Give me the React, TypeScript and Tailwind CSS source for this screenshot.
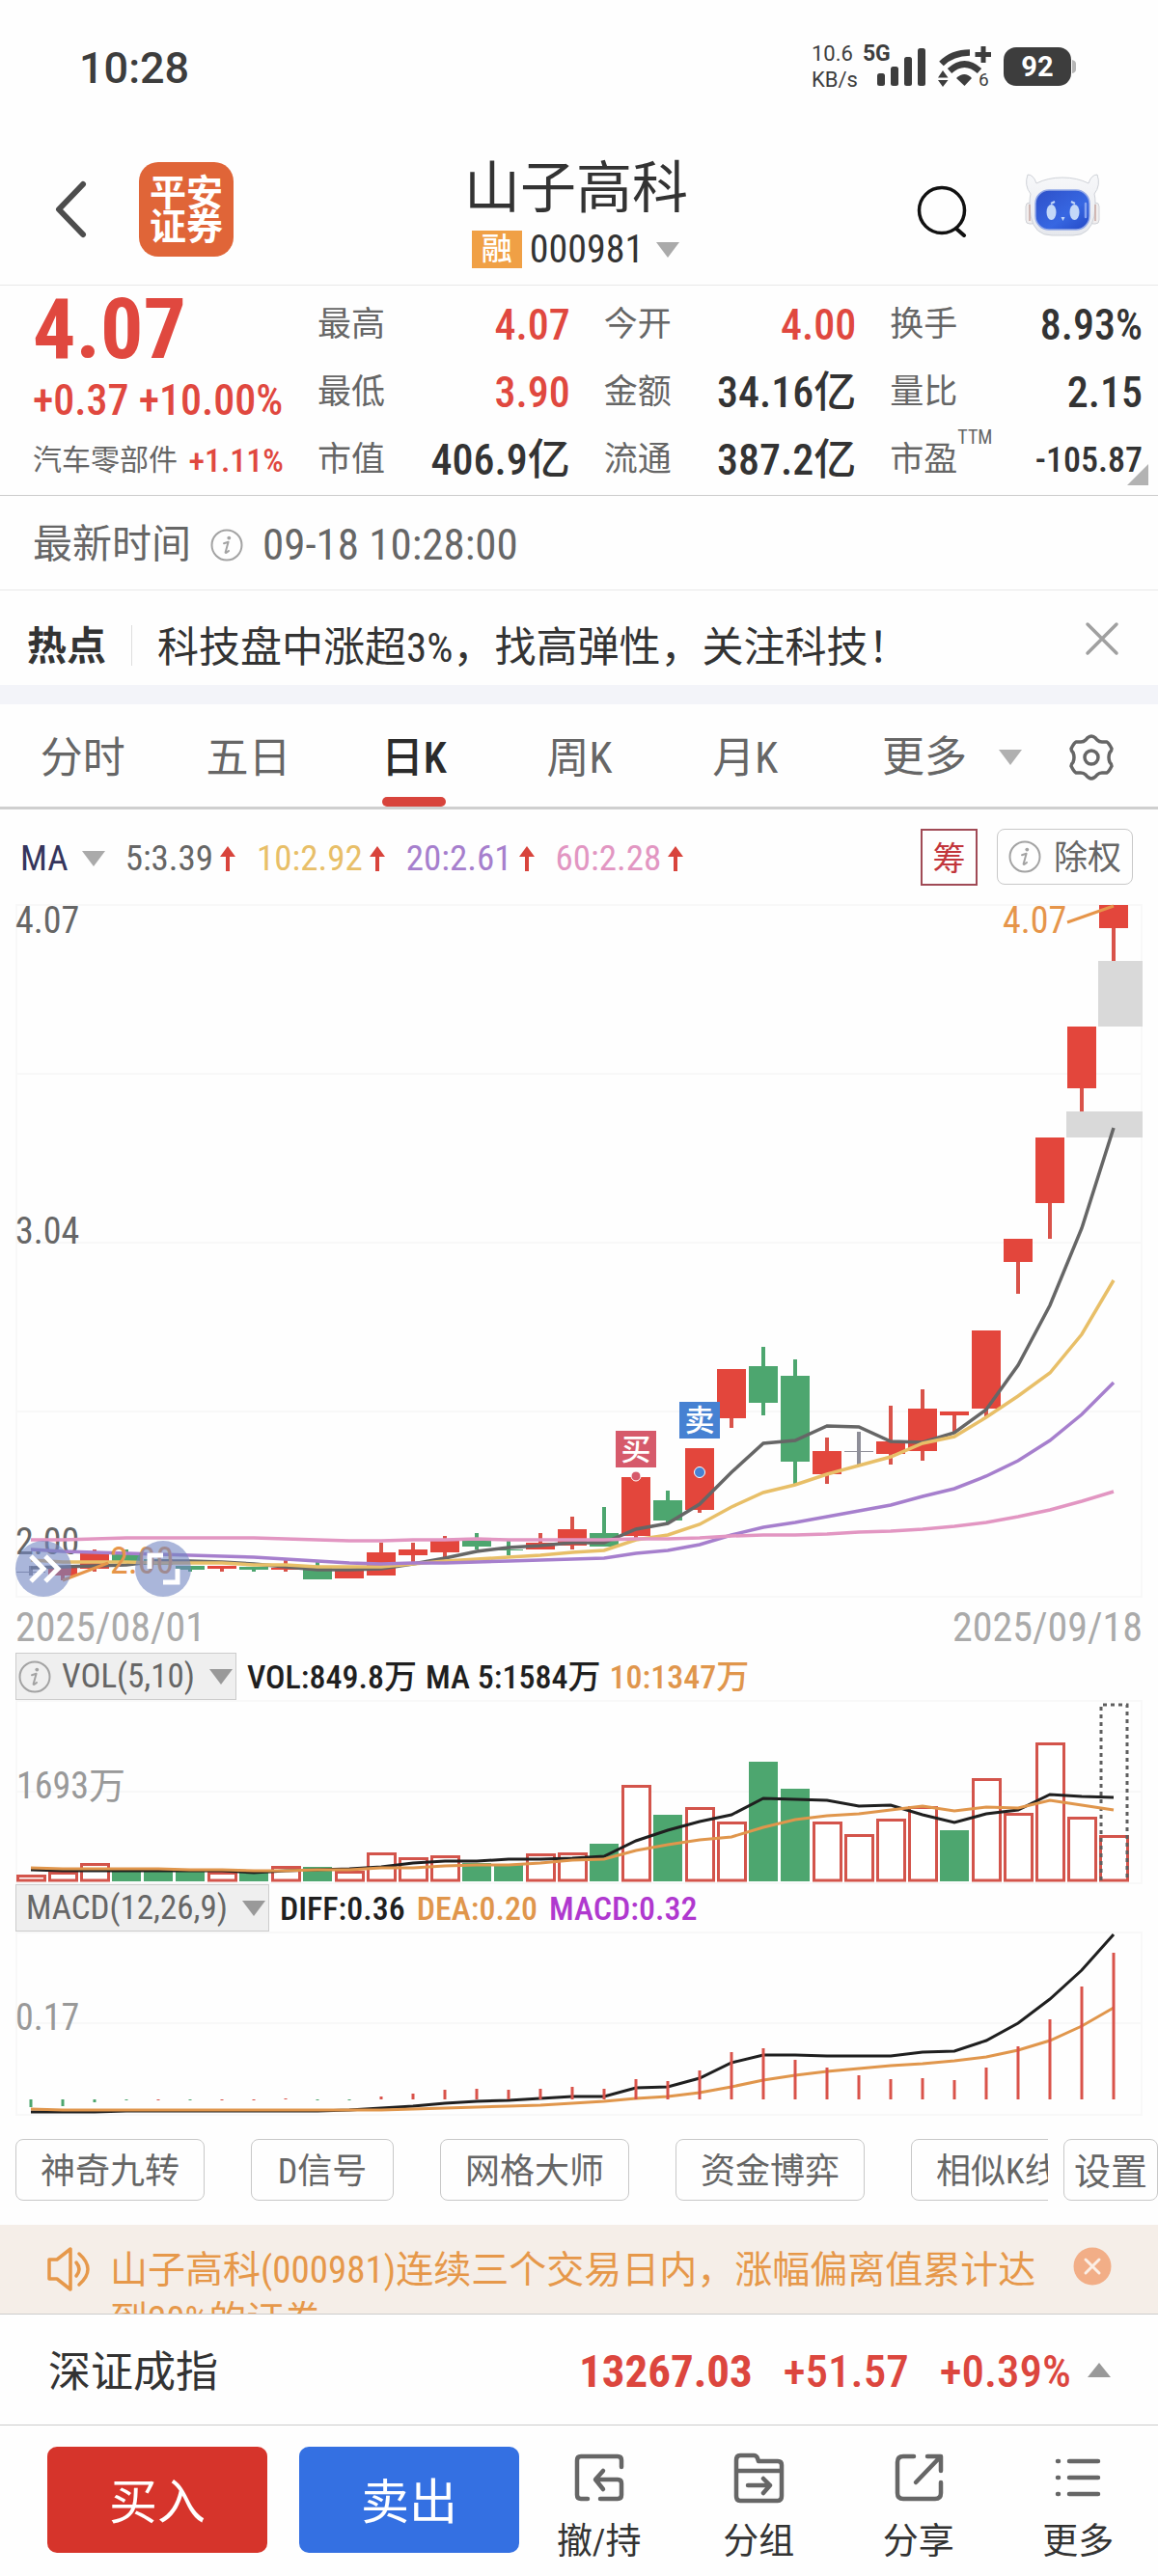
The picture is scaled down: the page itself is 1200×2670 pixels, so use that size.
import React, { useState } from 'react';
import clsx from 'clsx';

type Tone = 'red' | 'green' | 'gray';

interface Candle {
  tone: Tone;
  top: number;
  bottom: number;
  high: number;
  low: number;
}

const FIRST_X = 32;
const STEP = 33;
const xAt = (i: number) => FIRST_X + i * STEP;
const toPoints = (ys: number[]) => ys.map((y, i) => `${xAt(i)},${y}`).join(' ');

const toneFill: Record<Tone, string> = { red: '#e3463c', green: '#4da66f', gray: '#8e8e98' };
const toneWick: Record<Tone, string> = { red: '#d9534a', green: '#4da66f', gray: '#8e8e98' };

const c = (tone: Tone, top: number, bottom: number, high = top, low = bottom): Candle => ({ tone, top, bottom, high, low });

const candles: Candle[] = [
  c('gray', 1629, 1630, 1623, 1633),
  c('red', 1625, 1633, 1625, 1638),
  c('red', 1610, 1626, 1606, 1629),
  c('green', 1611, 1618, 1606, 1618),
  c('green', 1616, 1622),
  c('green', 1623, 1627, 1623, 1629),
  c('red', 1623, 1626, 1623, 1629),
  c('green', 1624, 1627, 1624, 1629),
  c('red', 1625, 1627, 1617, 1629),
  c('green', 1625, 1637, 1619, 1637),
  c('red', 1628, 1636),
  c('red', 1609, 1633, 1599, 1633),
  c('red', 1606, 1612, 1599, 1619),
  c('red', 1597, 1609, 1592, 1614),
  c('green', 1597, 1603, 1589, 1606),
  c('green', 1606, 1607, 1597, 1612),
  c('red', 1599, 1606, 1589, 1606),
  c('red', 1585, 1602, 1572, 1606),
  c('green', 1589, 1603, 1562, 1603),
  c('red', 1531, 1592, 1531, 1594),
  c('green', 1555, 1576, 1545, 1579),
  c('red', 1501, 1565, 1501, 1568),
  c('red', 1419, 1470, 1419, 1480),
  c('green', 1416, 1454, 1396, 1467),
  c('green', 1426, 1515, 1409, 1538),
  c('red', 1504, 1528, 1490, 1538),
  c('gray', 1504, 1505, 1484, 1518),
  c('red', 1494, 1507, 1457, 1518),
  c('red', 1460, 1504, 1440, 1514),
  c('red', 1463, 1467, 1463, 1484),
  c('red', 1379, 1460, 1379, 1468),
  c('red', 1284, 1308, 1284, 1341),
  c('red', 1179, 1247, 1179, 1284),
  c('red', 1064, 1128, 1064, 1152),
  c('red', 938, 962, 938, 996),
];

const priceLines = [
  { color: '#666666', ys: [1625, 1624, 1623, 1622, 1618, 1618, 1619, 1621, 1624, 1627, 1627, 1626, 1621, 1615, 1608, 1604, 1602, 1599, 1599, 1585, 1579, 1559, 1526, 1496, 1493, 1478, 1479, 1494, 1495, 1485, 1461, 1415, 1353, 1273, 1169] },
  { color: '#e8bf68', ys: [1617, 1619, 1619, 1619, 1620, 1620, 1620, 1622, 1622, 1624, 1624, 1624, 1621, 1618, 1616, 1614, 1612, 1609, 1607, 1596, 1591, 1580, 1562, 1547, 1539, 1528, 1519, 1510, 1496, 1489, 1469, 1447, 1423, 1383, 1327] },
  { color: '#a67fcd', ys: [1606, 1608, 1609, 1610, 1611, 1612, 1613, 1614, 1616, 1618, 1620, 1621, 1620, 1620, 1619, 1618, 1617, 1616, 1615, 1610, 1607, 1601, 1591, 1583, 1578, 1572, 1566, 1560, 1551, 1543, 1530, 1514, 1493, 1466, 1433] },
  { color: '#e296c2', ys: [1596, 1596, 1595, 1594, 1594, 1594, 1594, 1594, 1595, 1596, 1597, 1597, 1596, 1596, 1595, 1596, 1596, 1596, 1596, 1595, 1595, 1594, 1592, 1591, 1591, 1590, 1588, 1587, 1585, 1582, 1578, 1572, 1565, 1556, 1546] },
];

const volumeTops = [1943, 1940, 1931, 1939, 1939, 1939, 1940, 1941, 1934, 1935, 1939, 1920, 1925, 1923, 1931, 1933, 1921, 1920, 1911, 1850, 1881, 1873, 1888, 1826, 1854, 1888, 1901, 1885, 1872, 1897, 1843, 1879, 1806, 1883, 1902];
const volumeGreen = [3, 4, 5, 7, 9, 14, 15, 18, 20, 23, 24, 29];
const volumeMa5 = [1938, 1939, 1939, 1939, 1939, 1939, 1939, 1941, 1939, 1938, 1937, 1935, 1931, 1929, 1929, 1927, 1927, 1926, 1924, 1908, 1897, 1888, 1881, 1864, 1865, 1866, 1872, 1871, 1881, 1889, 1880, 1876, 1860, 1862, 1863];
const volumeMa10 = [1936, 1937, 1937, 1937, 1937, 1938, 1938, 1939, 1939, 1938, 1938, 1936, 1936, 1934, 1933, 1933, 1931, 1928, 1927, 1918, 1912, 1907, 1904, 1894, 1886, 1882, 1880, 1876, 1872, 1877, 1873, 1874, 1866, 1871, 1876];

const macdZero = 2176;
const macdTips = [2184, 2183, 2179, 2177, 2176, 2177, 2176, 2176, 2175, 2177, 2177, 2173, 2170, 2166, 2165, 2166, 2165, 2163, 2165, 2155, 2157, 2146, 2127, 2123, 2135, 2143, 2151, 2155, 2154, 2156, 2143, 2121, 2093, 2059, 2024];
const diff = [2189, 2189, 2189, 2188, 2188, 2188, 2188, 2188, 2188, 2188, 2187, 2185, 2183, 2180, 2178, 2177, 2175, 2173, 2173, 2164, 2163, 2154, 2138, 2130, 2130, 2131, 2131, 2131, 2127, 2126, 2115, 2097, 2072, 2042, 2005];
const dea = [2186, 2187, 2187, 2187, 2187, 2187, 2187, 2187, 2187, 2187, 2187, 2187, 2186, 2185, 2184, 2183, 2182, 2180, 2178, 2175, 2173, 2169, 2163, 2156, 2151, 2147, 2144, 2141, 2139, 2136, 2132, 2125, 2115, 2100, 2081];

const quoteColumns = [
  [
    { label: '最高', value: '4.07', up: true },
    { label: '最低', value: '3.90', up: true },
    { label: '市值', value: '406.9亿' },
  ],
  [
    { label: '今开', value: '4.00', up: true },
    { label: '金额', value: '34.16亿' },
    { label: '流通', value: '387.2亿' },
  ],
  [
    { label: '换手', value: '8.93%' },
    { label: '量比', value: '2.15' },
    { label: '市盈', value: '-105.87', note: 'TTM', small: true },
  ],
];

const periods = ['分时', '五日', '日K', '周K', '月K'];

const averages = [
  { text: '5:3.39', color: 'text-[#666666]' },
  { text: '10:2.92', color: 'text-[#e8bf68]' },
  { text: '20:2.61', color: 'text-[#a67fcd]' },
  { text: '60:2.28', color: 'text-[#e296c2]' },
];

const tools = ['神奇九转', 'D信号', '网格大师', '资金博弈', '相似K线'];

function Caret({ up = false, className }: { up?: boolean; className?: string }) {
  return (
    <svg viewBox="0 0 26 18" className={clsx('w-[26px] h-[18px] shrink-0', className)} aria-hidden="true">
      <path d={up ? 'M13 2 25 17H1Z' : 'M1 1H25L13 17Z'} fill="currentColor" />
    </svg>
  );
}

function InfoIcon() {
  return (
    <svg viewBox="0 0 34 34" className="w-[34px] h-[34px] shrink-0 text-[#a3a3a3]" fill="none" stroke="currentColor" aria-hidden="true">
      <circle cx="17" cy="17" r="15.5" strokeWidth="2" />
      <circle cx="19.3" cy="9.6" r="1.9" fill="currentColor" stroke="none" />
      <path d="M14 15.2 18.6 13.8 15.6 24.4Q15.6 26 19 23" strokeWidth="2" strokeLinecap="round" strokeLinejoin="round" />
    </svg>
  );
}

function StatusBar() {
  return (
    <div className="flex h-[138px] items-center justify-between pr-[85px] pl-[82px] font-['Roboto',sans-serif] text-[#3d3d3d]">
      <span className="pt-[4px] text-[45px] font-medium">10:28</span>
      <div className="flex items-center">
        <div className="w-[68px] text-[22px] leading-[27px]">
          <div className="flex gap-[10px]">
            10.6<b className="text-[23px]">5G</b>
          </div>
          <div>KB/s</div>
        </div>
        <svg viewBox="0 0 206 44" className="h-[44px] w-[206px] overflow-visible" aria-label="信号 电量" role="img">
          <g fill="#3d3d3d">
            <rect x="0" y="29" width="8" height="13" rx="2.5" />
            <rect x="14" y="22" width="8" height="20" rx="2.5" />
            <rect x="28" y="12" width="8" height="30" rx="2.5" />
            <rect x="42" y="3" width="8" height="39" rx="2.5" />
            <path d="M82 34Q90.500 26 98 34L90.500 42Z" />
            <path d="M63 33.500 68 26 73.500 33.500Z M63 36 73.500 36 68 43Z" />
            <rect x="131" y="2" width="70" height="40" rx="13" />
          </g>
          <g fill="none" stroke="#3d3d3d" strokeWidth="6.500">
            <path d="M66.500 19Q78 7.500 96 7.500" />
            <path d="M75 26.500Q90.500 12.500 106 26.500" />
            <path d="M101.500 9.500H118M110 1V18" strokeWidth="5" />
          </g>
          <path d="M202 15Q206 16 206 19V25Q206 28 202 29Z" fill="#b5b5b5" />
          <text x="105" y="42" fontSize="19" fill="#3d3d3d">6</text>
          <text x="166" y="32" textAnchor="middle" fontSize="29" fontWeight="bold" fill="#ffffff">92</text>
        </svg>
      </div>
    </div>
  );
}

function RobotIcon() {
  return (
    <svg viewBox="0 0 78 66" className="h-[66px] w-[78px]" aria-hidden="true">
      <defs>
        <linearGradient id="face" x1="0" y1="0" x2="1" y2="1">
          <stop offset="0" stopColor="#2e50c8" />
          <stop offset="0.6" stopColor="#3767e2" />
          <stop offset="1" stopColor="#2448c4" />
        </linearGradient>
        <linearGradient id="shell" x1="0" y1="0" x2="0" y2="1">
          <stop offset="0" stopColor="#f7f8fa" />
          <stop offset="1" stopColor="#e6e8ed" />
        </linearGradient>
      </defs>
      <g stroke="#cfd2d8" strokeWidth="1">
        <rect x="1" y="30" width="10" height="22" rx="4" fill="#f1eeee" />
        <rect x="67" y="30" width="10" height="22" rx="4" fill="#f1eeee" />
        <path d="M3 1Q9 1 12 10Q24 4 39 4Q54 4 66 10Q69 1 75 1Q79 12 72 21Q74 28 72 44Q68 64 50 64H28Q10 64 6 44Q4 28 6 21Q-1 12 3 1Z" fill="url(#shell)" />
      </g>
      <path d="M5 32V49M73 32V49" stroke="#c9a9a4" strokeWidth="1.500" />
      <rect x="11" y="17" width="56" height="41" rx="14" fill="url(#face)" stroke="#93a9e8" strokeWidth="1.500" />
      <ellipse cx="27.500" cy="40" rx="5" ry="8" fill="#c3d8f8" />
      <ellipse cx="51.500" cy="40" rx="5" ry="8" fill="#c3d8f8" />
      <path d="M27 31 31 29M52 31 48 29" stroke="#c3d8f8" strokeWidth="2" />
      <path d="M37.500 45H41.500L39.500 49Z" fill="#c3d8f8" />
      <path d="M63 31V45" stroke="#86a4f2" strokeWidth="2.500" strokeLinecap="round" />
    </svg>
  );
}

function Header() {
  return (
    <header className="grid h-[158px] grid-cols-[1fr_auto_1fr] items-center border-b border-[#e8e8e8] pr-[60px] pl-[54px]">
      <div className="flex items-center gap-[52px]">
        <button aria-label="返回">
          <svg viewBox="0 0 38 62" className="h-[62px] w-[38px]" fill="none" stroke="#4d4d4d" strokeWidth="6" strokeLinecap="round" strokeLinejoin="round">
            <path d="M32 5 7 31 32 57" />
          </svg>
        </button>
        <div className="flex size-[98px] flex-col items-center justify-center rounded-[20px] bg-[#e06538] pt-[2px] text-[38px] leading-[35px] font-bold text-white">
          <span>平安</span>
          <span>证券</span>
        </div>
      </div>
      <div className="flex flex-col items-center pt-[10px]">
        <h1 className="text-[58px] leading-[64px] text-[#333333]">山子高科</h1>
        <button className="flex items-center gap-[8px] pt-[10px] text-[40px] leading-[44px] text-[#333333]">
          <span className="flex h-[39px] w-[52px] items-center justify-center bg-[#f0a045] text-[32px] leading-[39px] font-medium text-white">融</span>
          000981
          <Caret className="ml-[4px] text-[#aaaaaa]" />
        </button>
      </div>
      <div className="flex items-center justify-end gap-[58px]">
        <button aria-label="搜索">
          <svg viewBox="0 0 54 58" className="h-[58px] w-[54px]" fill="none" stroke="#111111" strokeWidth="3.500" strokeLinecap="round">
            <circle cx="26" cy="30" r="23.500" />
            <path d="M41 49 49 56" strokeWidth="4" />
          </svg>
        </button>
        <button aria-label="智能助手" className="pb-[8px]">
          <RobotIcon />
        </button>
      </div>
    </header>
  );
}

function Quote() {
  return (
    <section className="relative flex gap-[35px] border-b border-[#cccccc] pt-[6px] pr-4 pb-px pl-[34px]">
      <div className="w-[260px] whitespace-nowrap text-[#e0483f]">
        <div className="text-[88px] leading-[78px] font-bold">4.07</div>
        <div className="text-[44px] leading-[70px] font-medium">+0.37 +10.00%</div>
        <div className="flex items-center justify-between text-[30px] leading-[54px] text-[#666666]">
          汽车零部件
          <span className="text-[34px] font-medium text-[#e0483f]">+1.11%</span>
        </div>
      </div>
      {quoteColumns.map((column, i) => (
        <dl key={i} className="flex-1">
          {column.map((item) => (
            <div key={item.label} className="flex h-[70px] items-center justify-between whitespace-nowrap">
              <dt className="relative text-[35px] text-[#666666]">
                {item.label}
                {item.note && <span className="absolute -top-[8px] left-full text-[20px] leading-[20px]">{item.note}</span>}
              </dt>
              <dd className={clsx('font-medium', item.small ? 'text-[36px]' : 'text-[44px]', item.up ? 'text-[#e0483f]' : 'text-[#333333]')}>
                {item.value}
              </dd>
            </div>
          ))}
        </dl>
      ))}
      <svg viewBox="0 0 22 22" className="absolute right-[10px] bottom-[10px] size-[22px]" aria-hidden="true">
        <path d="M22 0V22H0Z" fill="#b3b3b3" />
      </svg>
    </section>
  );
}

function Notices() {
  return (
    <>
      <div className="flex h-[98px] items-center gap-[20px] border-b border-[#e8e8e8] px-[34px] pt-[5px] text-[41px] text-[#666666]">
        最新时间
        <InfoIcon />
        <time className="text-[45px]">09-18 10:28:00</time>
      </div>
      <div className="flex h-[98px] items-center px-[28px] pt-[20px] text-[41px] text-[#333333]">
        <b>热点</b>
        <span className="mx-[26px] mb-[4px] h-[42px] w-px bg-[#dddddd]" />
        <span className="flex-1 text-[43px]">科技盘中涨超3%，找高弹性，关注科技！</span>
        <button aria-label="关闭" className="mr-[12px] mb-[18px]">
          <svg viewBox="0 0 36 36" className="size-[36px]" stroke="#a0a0a0" strokeWidth="3.500" strokeLinecap="round">
            <path d="M3 3 33 33M33 3 3 33" />
          </svg>
        </button>
      </div>
      <div className="h-[20px] bg-[#f3f4f9]" />
    </>
  );
}

function PeriodTabs() {
  const [active, setActive] = useState('日K');

  return (
    <nav className="flex h-[109px] border-b-[3px] border-[#cfcfcf] text-[44px] text-[#666666]">
      {periods.map((p) => (
        <button
          key={p}
          onClick={() => setActive(p)}
          className={clsx('relative flex flex-1 items-center justify-center pt-[6px]', p === active && 'font-medium text-[#2b2b2b]')}
        >
          {p}
          {p === active && <span className="absolute bottom-0 h-[10px] w-[66px] rounded-[5px] bg-[#d8443c]" />}
        </button>
      ))}
      <div className="flex w-[28.5%] items-center justify-between pt-[4px] pr-[44px] pl-[56px]">
        <button className="flex items-center gap-[32px]">
          更多
          <Caret className="text-[#b0b0b0]" />
        </button>
        <button aria-label="设置">
          <svg viewBox="0 0 50 50" className="size-[50px]" fill="none" stroke="#666666" strokeWidth="3.500" strokeLinejoin="round">
            <path d="M25 3Q28 3 31 7Q33 9 36 9L41 9Q43 10 46 16Q46 18 44 20Q42 25 44 30Q46 32 46 34Q43 40 41 41L36 41Q33 41 31 43Q28 47 25 47Q22 47 19 43Q17 41 14 41L9 41Q7 40 4 34Q4 32 6 30Q8 25 6 20Q4 18 4 16Q7 10 9 9L14 9Q17 9 19 7Q22 3 25 3Z" />
            <circle cx="25" cy="25" r="7" />
          </svg>
        </button>
      </div>
    </nav>
  );
}

function AverageBar() {
  return (
    <div className="flex h-[98px] items-center pr-[26px] pl-[21px] text-[37px]">
      <button className="flex items-center gap-[13px] pt-[4px] text-[#35355c]">
        MA
        <Caret className="text-[#aaaaaa]" />
      </button>
      <div className="ml-[20px] flex flex-1 gap-[22px] pt-[4px]">
        {averages.map((a) => (
          <span key={a.text} className={clsx('flex items-center gap-[7px]', a.color)}>
            {a.text}
            <svg viewBox="0 0 16 26" className="h-[26px] w-[16px]" aria-hidden="true">
              <path d="M8 0 16 11H10V26H6V11H0Z" fill="#d8443c" />
            </svg>
          </span>
        ))}
      </div>
      <button className="size-[59px] border-2 border-[#a04a55] pt-[2px] text-[34px] leading-[54px] text-[#c2363c]">筹</button>
      <button className="ml-[20px] flex h-[58px] items-center gap-[13px] rounded-[8px] border border-[#c8c8c8] px-[11px] pt-[4px] text-[35px] text-[#666666]">
        <span className="pb-[4px]">
          <InfoIcon />
        </span>
        除权
      </button>
    </div>
  );
}

function PriceChart() {
  return (
    <div className="px-4">
      <svg viewBox="16 937 1168 720" className="block w-full overflow-visible" role="img" aria-label="日K线">
        <g stroke="#f8f8f8" strokeWidth="2">
          <path d="M17 938H1183V1655H17ZM17 1113H1183M17 1288H1183M17 1463H1183" fill="none" />
        </g>
        <rect x="1138" y="996" width="46" height="68" fill="#d9d9d9" />
        <rect x="1105" y="1152" width="79" height="27" fill="#d9d9d9" />
        <g fill="#666666" className="text-[38px]">
          <text x="16" y="967">4.07</text>
          <text x="16" y="1289">3.04</text>
          <text x="16" y="1611">2.00</text>
        </g>
        {candles.map((k, i) => (
          <g key={i}>
            <rect x={xAt(i) - 2} y={k.high} width="4" height={k.low - k.high} fill={toneWick[k.tone]} />
            <rect x={xAt(i) - 15} y={k.top} width="30" height={k.bottom - k.top} fill={toneFill[k.tone]} />
          </g>
        ))}
        {priceLines.map((line) => (
          <polyline key={line.color} points={toPoints(line.ys)} fill="none" stroke={line.color} strokeWidth="3.500" />
        ))}
        <path d="M1106 956 1154 939M65 1638 112 1620" stroke="#e6954a" strokeWidth="3" />
        <g fill="#e6954a" className="text-[38px]">
          <text x="1039" y="967">4.07</text>
          <text x="114" y="1631">2.00</text>
        </g>
        <g fill="#7286c2" fillOpacity="0.6">
          <circle cx="45" cy="1626" r="29" />
          <circle cx="169" cy="1626" r="29" />
        </g>
        <g fill="none" stroke="#ffffff" strokeWidth="5">
          <path d="M32 1613 45 1626 32 1639M47 1613 60 1626 47 1639" />
          <path d="M155 1626V1612H169M169 1640H184V1626" />
        </g>
        <rect x="638" y="1483" width="42" height="38" fill="#d65a6b" />
        <rect x="704" y="1453" width="42" height="38" fill="#4681d2" />
        <g fill="#ffffff" textAnchor="middle" className="text-[31px] font-medium">
          <text x="659" y="1513">买</text>
          <text x="725" y="1483">卖</text>
        </g>
        <circle cx="659" cy="1530" r="5" fill="#d65a6b" stroke="#ffffff" />
        <circle cx="725" cy="1526" r="5.500" fill="#4681d2" stroke="#ffffff" />
      </svg>
      <div className="flex justify-between pt-[4px] text-[42px] leading-[52px] text-[#aaaaaa]">
        <time>2025/08/01</time>
        <time>2025/09/18</time>
      </div>
    </div>
  );
}

function IndicatorButton({ label, info }: { label: string; info?: boolean }) {
  return (
    <button className={clsx('mr-[11px] flex h-[49px] items-center border border-[#cccccc] bg-[#efefef] pr-[2px] text-[35px] font-normal text-[#666666]', info ? 'pl-[2px]' : 'pl-[10px]')}>
      {info && <InfoIcon />}
      <span className={clsx('pt-[2px]', info && 'ml-[11px]')}>{label}</span>
      <Caret className="ml-[14px] text-[#999999]" />
    </button>
  );
}

function VolumeChart() {
  return (
    <section className="px-4">
      <div className="flex h-[49px] items-center text-[34px] font-medium whitespace-nowrap text-[#1f1f1f]">
        <IndicatorButton label="VOL(5,10)" info />
        <div className="flex gap-[9px] pt-[2px]">
          <span>VOL:849.8万</span>
          <span>MA 5:1584万</span>
          <span className="text-[#e0964c]">10:1347万</span>
        </div>
      </div>
      <svg viewBox="16 1762 1168 191" className="block w-full overflow-visible" role="img" aria-label="成交量">
        <path d="M17 1763H1183V1952H17ZM17 1857H1183" fill="none" stroke="#f8f8f8" strokeWidth="2" />
        <text x="17" y="1864" fill="#999999" className="text-[38px]">1693万</text>
        {volumeTops.map((top, i) =>
          volumeGreen.includes(i) ? (
            <rect key={i} x={xAt(i) - 15} y={top} width="30" height={1950 - top} fill="#4da66f" />
          ) : (
            <rect key={i} x={xAt(i) - 13.5} y={top + 1.5} width="28" height={1947.5 - top} fill="#ffffff" stroke="#d3544b" strokeWidth="3" />
          )
        )}
        <path d="M1141 1949V1767H1168V1949" fill="none" stroke="#5e5e5e" strokeWidth="3" strokeDasharray="4 4" />
        <polyline points={toPoints(volumeMa5)} fill="none" stroke="#1f1f1f" strokeWidth="3" />
        <polyline points={toPoints(volumeMa10)} fill="none" stroke="#e0964c" strokeWidth="3" />
      </svg>
    </section>
  );
}

function MacdChart() {
  return (
    <section className="px-4">
      <div className="flex h-[49px] items-center text-[34px] font-medium whitespace-nowrap">
        <IndicatorButton label="MACD(12,26,9)" />
        <div className="flex gap-[12px] pt-[2px]">
          <span className="text-[#1f1f1f]">DIFF:0.36</span>
          <span className="text-[#e0964c]">DEA:0.20</span>
          <span className="text-[#b038cf]">MACD:0.32</span>
        </div>
      </div>
      <svg viewBox="16 2002 1168 191" className="block w-full overflow-visible" role="img" aria-label="MACD">
        <path d="M17 2003H1183V2192H17ZM17 2097H1183" fill="none" stroke="#f8f8f8" strokeWidth="2" />
        <text x="16" y="2104" fill="#999999" className="text-[38px]">0.17</text>
        <polyline points={toPoints(diff)} fill="none" stroke="#1f1f1f" strokeWidth="3" />
        <polyline points={toPoints(dea)} fill="none" stroke="#e0964c" strokeWidth="3" />
        {macdTips.map((tip, i) => (
          <rect
            key={i}
            x={xAt(i) - 1.5}
            y={Math.min(tip, macdZero)}
            width="3"
            height={Math.max(Math.abs(tip - macdZero), 1)}
            fill={tip > macdZero ? '#4da66f' : '#d9534a'}
          />
        ))}
      </svg>
    </section>
  );
}

function ToolRow() {
  return (
    <div className="flex gap-[16px] pt-[24px] pb-[25px] pl-4 text-[36px] text-[#666666]">
      <div className="flex flex-1 gap-[48px] overflow-hidden">
        {tools.map((t) => (
          <button key={t} className="h-[64px] min-w-[148px] shrink-0 rounded-[8px] border border-[#c8c8c8] px-[25px] pt-[4px] whitespace-nowrap">
            {t}
          </button>
        ))}
      </div>
      <button className="h-[64px] w-[98px] shrink-0 rounded-[8px] border border-[#c8c8c8] pt-[4px] text-[38px] whitespace-nowrap">设置</button>
    </div>
  );
}

function Announcement() {
  return (
    <div className="flex h-[92px] items-start overflow-hidden bg-[#f5eee8] px-[48px] text-[#e6984a]">
      <svg viewBox="0 0 48 48" className="mt-[22px] size-[48px] shrink-0" fill="none" stroke="currentColor" strokeWidth="3.500" strokeLinejoin="round" strokeLinecap="round" aria-hidden="true">
        <path d="M3 14H11L25 3V45L11 34H3Z" />
        <path d="M31 17Q37 24 31 31M34 8Q52 24 34 40" />
      </svg>
      <p className="mx-[18px] mt-[21px] w-[964px] text-[39px] leading-[52px]">山子高科(000981)连续三个交易日内，涨幅偏离值累计达到20%的证券</p>
      <button aria-label="关闭公告" className="mt-[23px] ml-auto shrink-0">
        <svg viewBox="0 0 40 40" className="size-[40px]">
          <circle cx="20" cy="20" r="19.500" fill="#f2ae87" />
          <path d="M13 13 27 27M27 13 13 27" stroke="#fbeee5" strokeWidth="3" strokeLinecap="round" />
        </svg>
      </button>
    </div>
  );
}

function IndexRow() {
  return (
    <div className="flex h-[115px] items-center border-t border-[#cccccc] pt-[5px] pr-[48px] pl-[50px] text-[47px] font-medium whitespace-nowrap text-[#dc463e]">
      <span className="flex-1 text-[44px] font-normal text-[#333333]">深证成指</span>
      <span className="font-bold">13267.03</span>
      <span className="ml-[32px]">+51.57</span>
      <span className="ml-[32px]">+0.39%</span>
      <Caret up className="mb-[6px] ml-[16px] text-[#999999]" />
    </div>
  );
}

const actions = [
  {
    label: '撤/持',
    icon: <path d="M50 15V8Q50 4 46 4H8Q4 4 4 8V44Q4 48 8 48H15M28 48H46Q50 48 50 44V32Q50 28 46 28H24M31 19 23 28 31 38" />,
  },
  {
    label: '分组',
    icon: <path d="M4 8Q4 3 8 3H22Q25 3 26 6L27 9H47Q51 9 51 13V45Q51 50 47 50H8Q4 50 4 45ZM4 19H51M16 34H39M32 27 39 34 32 42" />,
  },
  {
    label: '分享',
    icon: <path d="M22 4H11Q5 4 5 10V42Q5 48 11 48H44Q50 48 50 42V31M24 31 48 6M36 4H50V19" />,
  },
  {
    label: '更多',
    icon: <path d="M18 9H48M18 26H48M18 43H48M6 9H7M6 26H7M6 43H7" />,
  },
];

function BottomBar() {
  return (
    <footer className="flex border-t border-[#cccccc] pt-[22px] pb-[22px] pl-[49px]">
      <button className="h-[110px] w-[228px] rounded-[10px] bg-[#d6342b] pt-[6px] text-[50px] text-white">买入</button>
      <button className="ml-[33px] h-[110px] w-[228px] rounded-[10px] bg-[#3470e2] pt-[6px] text-[50px] text-white">卖出</button>
      <div className="flex flex-1">
        {actions.map((a) => (
          <button key={a.label} className="flex flex-1 flex-col items-center gap-[12px] pt-[6px] text-[37px] leading-[54px] text-[#333333]">
            <svg viewBox="0 0 54 54" className="size-[54px]" fill="none" stroke="#666666" strokeWidth="4.500" strokeLinecap="round" strokeLinejoin="round" aria-hidden="true">
              {a.icon}
            </svg>
            {a.label}
          </button>
        ))}
      </div>
    </footer>
  );
}

export default function App() {
  return (
    <div className="min-h-screen bg-[#fefefe] font-['Roboto_Condensed','Noto_Sans_CJK_SC',sans-serif]">
      <StatusBar />
      <Header />
      <Quote />
      <Notices />
      <PeriodTabs />
      <AverageBar />
      <PriceChart />
      <VolumeChart />
      <MacdChart />
      <ToolRow />
      <Announcement />
      <IndexRow />
      <BottomBar />
    </div>
  );
}
